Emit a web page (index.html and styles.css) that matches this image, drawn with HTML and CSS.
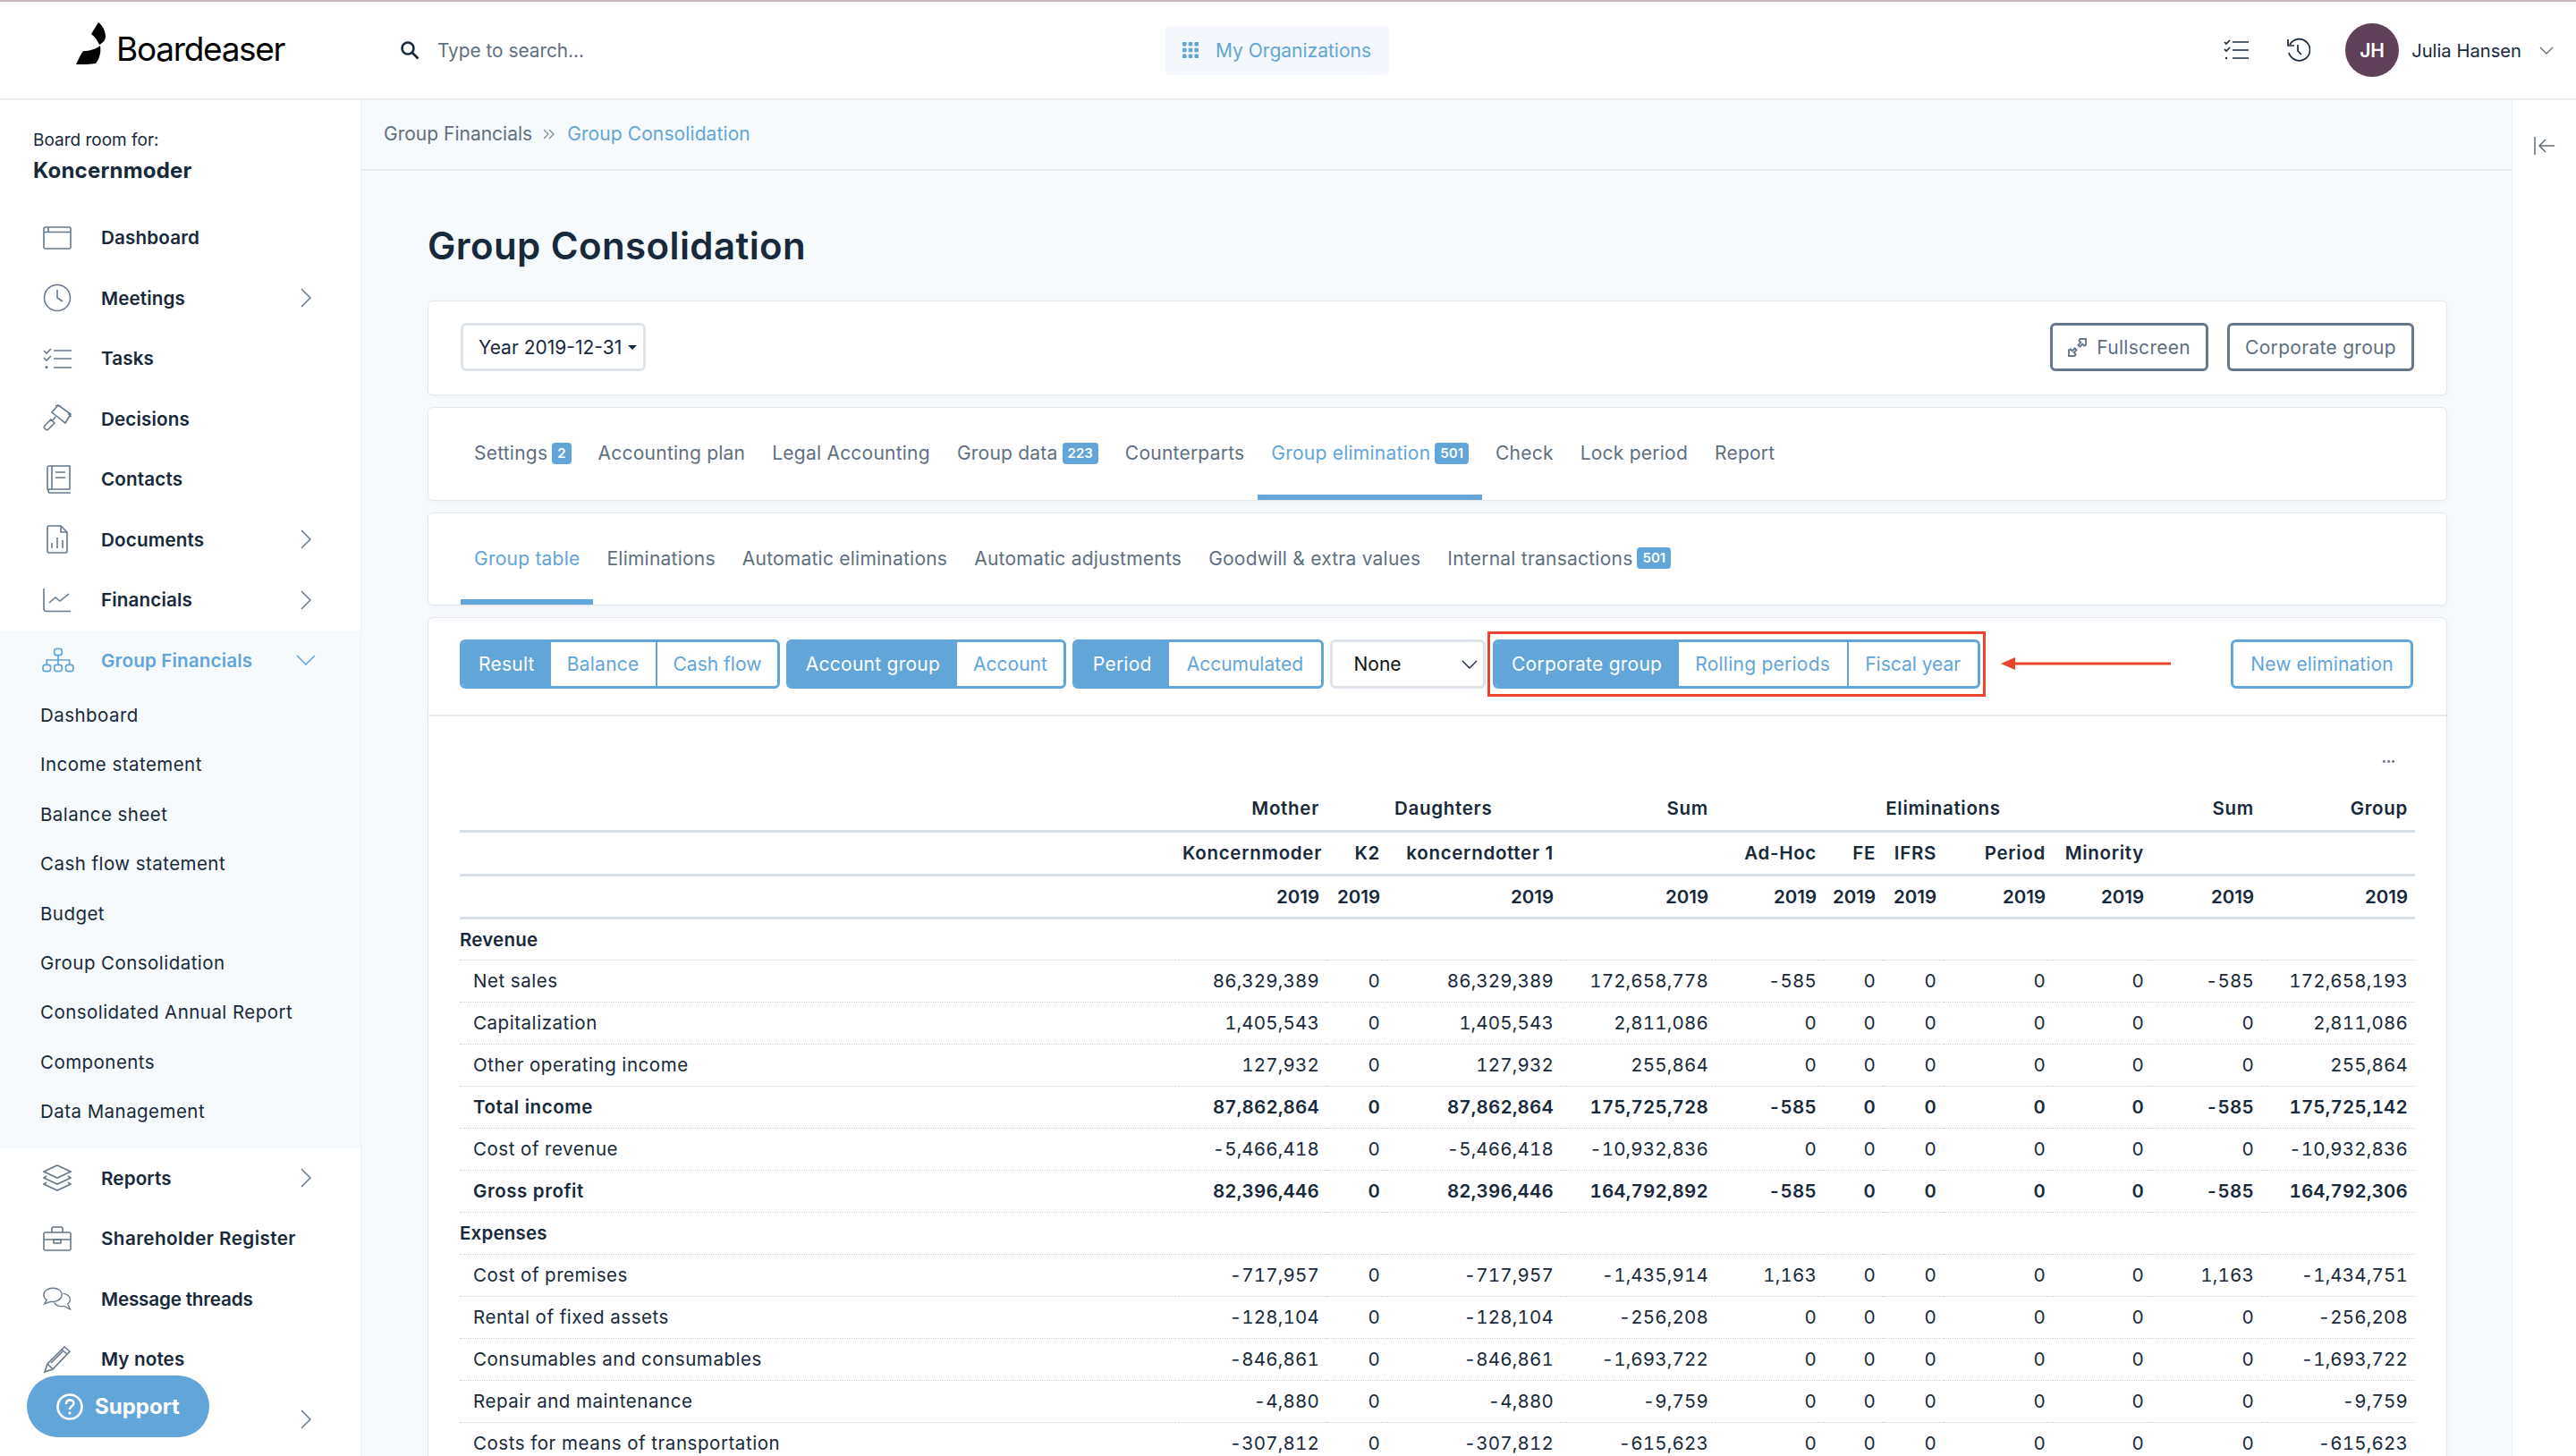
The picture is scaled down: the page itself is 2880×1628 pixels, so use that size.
FILE: index.html
```html
<!DOCTYPE html>
<html lang="en">
<head>
    <meta charset="UTF-8">
    <title>Group Consolidation</title>
    <link rel="stylesheet" href="styles.css">
</head>
<body>
    <header class="topbar">
        <div class="logo">
            <svg class="logo-mark" viewBox="0 0 34 48" width="34" height="48"><path d="M25 0C30 4 33 10 33 16 33 20 30 23 26 25 24 20 21 16 17 13z" fill="#000"/><path d="M27 26C28 32 27 40 22 46 16 47 7 47 0 47 3 41 5 36 8 32 15 32 22 30 27 26z" fill="#000"/></svg>
            <span class="logo-text">Boardeaser</span>
        </div>
        <div class="search">
            <svg viewBox="0 0 22 22" width="22" height="22" fill="none" stroke="#17293a" stroke-width="2.6"><circle cx="9" cy="9" r="6.5"/><path d="M14 14l6.5 6.5"/></svg>
            <span>Type to search...</span>
        </div>
        <div class="orgs">
            <svg viewBox="0 0 18 18" width="18" height="18" fill="#62a5d9"><rect width="4.6" height="4.6" rx="1"/><rect x="6.7" width="4.6" height="4.6" rx="1"/><rect x="13.4" width="4.6" height="4.6" rx="1"/><rect y="6.7" width="4.6" height="4.6" rx="1"/><rect x="6.7" y="6.7" width="4.6" height="4.6" rx="1"/><rect x="13.4" y="6.7" width="4.6" height="4.6" rx="1"/><rect y="13.4" width="4.6" height="4.6" rx="1"/><rect x="6.7" y="13.4" width="4.6" height="4.6" rx="1"/><rect x="13.4" y="13.4" width="4.6" height="4.6" rx="1"/></svg>
            <span>My Organizations</span>
        </div>
        <div class="user">
            <svg class="top-icon" viewBox="0 0 28 24" width="28" height="24" fill="none" stroke="#17293a" stroke-width="1.7"><path d="M10 3h18M10 12h18M10 21h18"/><path d="M1 3l2 2 4-4M1 11l2 2 4-4"/><circle cx="3" cy="21" r="1.2" fill="#17293a" stroke="none"/></svg>
            <svg class="top-icon history" viewBox="0 0 28 28" width="28" height="28" fill="none" stroke="#17293a" stroke-width="1.7"><path d="M5 8a12 12 0 1 1-1 9"/><path d="M3 2v7h7"/><path d="M14 8v7l4 4"/></svg>
            <div class="avatar">JH</div>
            <span class="user-name">Julia Hansen</span>
            <svg viewBox="0 0 16 9" width="16" height="9" fill="none" stroke="#5f6f7f" stroke-width="1.4"><path d="M1 1l7 7 7-7"/></svg>
        </div>
    </header>

    <div class="app">
        <aside class="sidebar">
            <div class="room">
                <div class="room-label">Board room for:</div>
                <div class="room-name">Koncernmoder</div>
            </div>
            <nav class="nav">
                <a class="nav-item">
                    <svg class="nav-icon" viewBox="0 0 32 26"><rect x="1" y="1" width="30" height="24" rx="2"/><path d="M1 6.5h30M6 1v5.5"/></svg>
                    <span>Dashboard</span>
                </a>
                <a class="nav-item">
                    <svg class="nav-icon" viewBox="0 0 32 32"><circle cx="16" cy="16" r="14.5"/><path d="M16 7v9l6 4"/></svg>
                    <span>Meetings</span>
                    <svg class="chev" viewBox="0 0 12 22"><path d="M1 1l10 10L1 21"/></svg>
                </a>
                <a class="nav-item">
                    <svg class="nav-icon" viewBox="0 0 32 24"><path d="M12 3h20M12 12h20M12 22h20"/><path d="M1 3l3 3 5-5M1 11l3 3 5-5"/><circle cx="4" cy="21.5" r="1.6" fill="#66788a" stroke="none"/></svg>
                    <span>Tasks</span>
                </a>
                <a class="nav-item">
                    <svg class="nav-icon" viewBox="0 0 32 32"><path d="M17 1L10 9 25 21 31 11zM14 1.500l6 .5M28 10l3.500 4"/><path d="M14 14l-3 4"/><path d="M9 17l4 4-7 7a2 2 0 0 1-3 0l-1-1a2 2 0 0 1 0-3z"/></svg>
                    <span>Decisions</span>
                </a>
                <a class="nav-item">
                    <svg class="nav-icon" viewBox="0 0 32 32"><path d="M5 28V3a2 2 0 0 1 2-2h23v26H7a2.5 2.5 0 0 0 0 4h24"/><path d="M10 1v26M14 8h11M14 14h11"/></svg>
                    <span>Contacts</span>
                </a>
                <a class="nav-item">
                    <svg class="nav-icon" viewBox="0 0 32 32"><path d="M20 1H7a2 2 0 0 0-2 2v26a2 2 0 0 0 2 2h18a2 2 0 0 0 2-2V8z"/><path d="M20 1v7h7M10 26v-6M16 26V14M22 26v-9"/></svg>
                    <span>Documents</span>
                    <svg class="chev" viewBox="0 0 12 22"><path d="M1 1l10 10L1 21"/></svg>
                </a>
                <a class="nav-item">
                    <svg class="nav-icon" viewBox="0 0 32 28"><path d="M1 1v23a2.5 2.5 0 0 0 2.5 2.5H31"/><path d="M7 17l7-6 5 4 10-8"/></svg>
                    <span>Financials</span>
                    <svg class="chev" viewBox="0 0 12 22"><path d="M1 1l10 10L1 21"/></svg>
                </a>
                <div class="nav-group">
                    <a class="nav-item is-open">
                        <svg class="nav-icon" viewBox="0 0 34 26"><rect x="13" y="1" width="8" height="7" rx="2.5"/><rect x="1" y="18" width="8" height="7" rx="2.5"/><rect x="13" y="18" width="8" height="7" rx="2.5"/><rect x="25" y="18" width="8" height="7" rx="2.5"/><path d="M17 8v10M5 18v-5h24v5"/></svg>
                        <span>Group Financials</span>
                        <svg class="chev-down" viewBox="0 0 22 12"><path d="M1 1l10 10L21 1"/></svg>
                    </a>
                    <a class="sub-item">Dashboard</a>
                    <a class="sub-item">Income statement</a>
                    <a class="sub-item">Balance sheet</a>
                    <a class="sub-item">Cash flow statement</a>
                    <a class="sub-item">Budget</a>
                    <a class="sub-item">Group Consolidation</a>
                    <a class="sub-item">Consolidated Annual Report</a>
                    <a class="sub-item">Components</a>
                    <a class="sub-item">Data Management</a>
                </div>
                <a class="nav-item">
                    <svg class="nav-icon" viewBox="0 0 32 30"><path d="M16 1l15 7-15 7L1 8z"/><path d="M4 13l-3 2 15 7 15-7-3-2"/><path d="M4 20l-3 2 15 7 15-7-3-2"/></svg>
                    <span>Reports</span>
                    <svg class="chev" viewBox="0 0 12 22"><path d="M1 1l10 10L1 21"/></svg>
                </a>
                <a class="nav-item">
                    <svg class="nav-icon" viewBox="0 0 32 28"><rect x="1" y="7" width="30" height="20" rx="2"/><path d="M10 7V3a2 2 0 0 1 2-2h8a2 2 0 0 1 2 2v4M1 15h30"/><rect x="12" y="15" width="8" height="4"/></svg>
                    <span class="nav-wide">Shareholder Register</span>
                </a>
                <a class="nav-item">
                    <svg class="nav-icon" viewBox="0 0 38 30"><path d="M13 1C6 1 1 5 1 10c0 3 1 5 4 7l-3 5 8-3c7 1 14-2 15-8 1-6-5-10-12-10z"/><path d="M27 8c6 1 10 5 9 10-1 2-2 3-3 4l3 7-8-4c-6 1-11-1-13-5"/></svg>
                    <span class="nav-tight">Message threads</span>
                </a>
                <a class="nav-item">
                    <svg class="nav-icon" viewBox="0 0 32 32"><path d="M24 2l6 5-19 20-9 3 3-9z"/><path d="M5 21l6 6M21 5l6 5M9 20L22 7"/></svg>
                    <span>My notes</span>
                </a>
                <a class="nav-item">
                    <span></span>
                    <svg class="chev" viewBox="0 0 12 22"><path d="M1 1l10 10L1 21"/></svg>
                </a>
            </nav>
            <div class="support">
                <svg viewBox="0 0 30 30" width="30" height="30" fill="none" stroke="#fff" stroke-width="2.6"><circle cx="15" cy="15" r="13.5"/><path d="M11 12c0-6 8.500-6 8.500-1 0 3.500-4.500 3-4.500 7"/><circle cx="15" cy="22" r="1.600" fill="#fff" stroke="none"/></svg>
                <span>Support</span>
            </div>
        </aside>

        <main class="main">
            <div class="crumbs">
                <span>Group Financials</span>
                <svg viewBox="0 0 13 12" width="13" height="12" fill="none" stroke="#7c8a98" stroke-width="1.200"><path d="M1 1l5 5-5 5M7 1l5 5-5 5"/></svg>
                <span class="crumb-current">Group Consolidation</span>
            </div>
            <div class="content">
                <h1>Group Consolidation</h1>

                <section class="card card-actions">
                    <button class="btn btn-plain">Year 2019-12-31 <i class="caret"></i></button>
                    <div class="actions-right">
                        <button class="btn btn-dark">
                            <svg viewBox="0 0 22 22" width="21" height="21" fill="none" stroke="#66788a" stroke-width="2"><path d="M14 1h7v7l-2 1-2-2-3 3-2-2 3-3-2-2zM8 21H1v-7l2-1 2 2 3-3 2 2-3 3 2 2z"/></svg>
                            Fullscreen
                        </button>
                        <button class="btn btn-dark">Corporate group</button>
                    </div>
                </section>

                <section class="card tabs">
                    <a class="tab">Settings <b class="badge">2</b></a>
                    <a class="tab">Accounting plan</a>
                    <a class="tab">Legal Accounting</a>
                    <a class="tab">Group data <b class="badge">223</b></a>
                    <a class="tab">Counterparts</a>
                    <a class="tab active">Group elimination <b class="badge">501</b></a>
                    <a class="tab">Check</a>
                    <a class="tab">Lock period</a>
                    <a class="tab">Report</a>
                </section>

                <section class="card tabs">
                    <a class="tab active">Group table</a>
                    <a class="tab">Eliminations</a>
                    <a class="tab">Automatic eliminations</a>
                    <a class="tab">Automatic adjustments</a>
                    <a class="tab">Goodwill &amp; extra values</a>
                    <a class="tab">Internal transactions <b class="badge">501</b></a>
                </section>

                <section class="card card-table">
                    <div class="toolbar">
                        <div class="btn-group"><a class="on">Result</a><a>Balance</a><a>Cash flow</a></div>
                        <div class="btn-group group-account"><a class="on">Account group</a><a>Account</a></div>
                        <div class="btn-group group-period"><a class="on">Period</a><a>Accumulated</a></div>
                        <div class="fake-select">None <svg viewBox="0 0 18 10" width="18" height="10" fill="none" stroke="#17293a" stroke-width="1.400"><path d="M1 1l8 8 8-8"/></svg></div>
                        <div class="highlight">
                            <div class="btn-group"><a class="on">Corporate group</a><a>Rolling periods</a><a>Fiscal year</a></div>
                        </div>
                        <svg class="red-arrow" viewBox="0 0 190 16" width="190" height="16"><path d="M14 8h176" stroke="#e8452c" stroke-width="3"/><path d="M0 8l16-7v14z" fill="#e8452c"/></svg>
                        <a class="btn btn-blue">New elimination</a>
                    </div>
                    <div class="table-wrap">
                        <div class="more">•••</div>
                        <table class="grid">
                            <colgroup>
                                <col class="c-name"><col class="c-1"><col class="c-2"><col class="c-3"><col class="c-4"><col class="c-5"><col class="c-6"><col class="c-7"><col class="c-8"><col class="c-9"><col class="c-10"><col class="c-11">
                            </colgroup>
                            <thead>
                                <tr><th></th><th>Mother</th><th></th><th class="left">Daughters</th><th>Sum</th><th colspan="5" class="elim">Eliminations</th><th>Sum</th><th>Group</th></tr>
                                <tr><th></th><th>Koncernmoder</th><th>K2</th><th>koncerndotter 1</th><th></th><th>Ad-Hoc</th><th>FE</th><th>IFRS</th><th>Period</th><th>Minority</th><th></th><th></th></tr>
                                <tr class="years"><th></th><th>2019</th><th>2019</th><th>2019</th><th>2019</th><th>2019</th><th>2019</th><th>2019</th><th>2019</th><th>2019</th><th>2019</th><th>2019</th></tr>
                            </thead>
                            <tbody>
                                <tr class="section"><td colspan="12">Revenue</td></tr>
                                <tr><td>Net sales</td><td>86,329,389</td><td>0</td><td>86,329,389</td><td>172,658,778</td><td>-585</td><td>0</td><td>0</td><td>0</td><td>0</td><td>-585</td><td>172,658,193</td></tr>
                                <tr><td>Capitalization</td><td>1,405,543</td><td>0</td><td>1,405,543</td><td>2,811,086</td><td>0</td><td>0</td><td>0</td><td>0</td><td>0</td><td>0</td><td>2,811,086</td></tr>
                                <tr><td>Other operating income</td><td>127,932</td><td>0</td><td>127,932</td><td>255,864</td><td>0</td><td>0</td><td>0</td><td>0</td><td>0</td><td>0</td><td>255,864</td></tr>
                                <tr class="total"><td>Total income</td><td>87,862,864</td><td>0</td><td>87,862,864</td><td>175,725,728</td><td>-585</td><td>0</td><td>0</td><td>0</td><td>0</td><td>-585</td><td>175,725,142</td></tr>
                                <tr><td>Cost of revenue</td><td>-5,466,418</td><td>0</td><td>-5,466,418</td><td>-10,932,836</td><td>0</td><td>0</td><td>0</td><td>0</td><td>0</td><td>0</td><td>-10,932,836</td></tr>
                                <tr class="total"><td>Gross profit</td><td>82,396,446</td><td>0</td><td>82,396,446</td><td>164,792,892</td><td>-585</td><td>0</td><td>0</td><td>0</td><td>0</td><td>-585</td><td>164,792,306</td></tr>
                                <tr class="section"><td colspan="12">Expenses</td></tr>
                                <tr><td>Cost of premises</td><td>-717,957</td><td>0</td><td>-717,957</td><td>-1,435,914</td><td>1,163</td><td>0</td><td>0</td><td>0</td><td>0</td><td>1,163</td><td>-1,434,751</td></tr>
                                <tr><td>Rental of fixed assets</td><td>-128,104</td><td>0</td><td>-128,104</td><td>-256,208</td><td>0</td><td>0</td><td>0</td><td>0</td><td>0</td><td>0</td><td>-256,208</td></tr>
                                <tr><td>Consumables and consumables</td><td>-846,861</td><td>0</td><td>-846,861</td><td>-1,693,722</td><td>0</td><td>0</td><td>0</td><td>0</td><td>0</td><td>0</td><td>-1,693,722</td></tr>
                                <tr><td>Repair and maintenance</td><td>-4,880</td><td>0</td><td>-4,880</td><td>-9,759</td><td>0</td><td>0</td><td>0</td><td>0</td><td>0</td><td>0</td><td>-9,759</td></tr>
                                <tr><td>Costs for means of transportation</td><td>-307,812</td><td>0</td><td>-307,812</td><td>-615,623</td><td>0</td><td>0</td><td>0</td><td>0</td><td>0</td><td>0</td><td>-615,623</td></tr>
                            </tbody>
                        </table>
                    </div>
                </section>
            </div>
        </main>

        <aside class="rail">
            <svg viewBox="0 0 24 22" width="24" height="22" fill="none" stroke="#5f6f7f" stroke-width="1.500"><path d="M1 1v20M23 11H6M13 4l-7 7 7 7"/></svg>
        </aside>
    </div>
</body>
</html>
```

FILE: styles.css
```css
* {
    box-sizing: border-box;
}

html, body {
    margin: 0;
    height: 100%;
    overflow: hidden;
}

body {
    font-family: Inter, "Noto Sans", sans-serif;
    font-size: 21px;
    color: #17293a;
    background: #fff;
    display: flex;
    flex-direction: column;
}

/* top bar */
.topbar {
    height: 112px;
    flex: none;
    display: flex;
    align-items: center;
    border-top: 2px solid #c9b5bd;
    border-bottom: 2px solid #e8ecf0;
    background: #fff;
}

.logo {
    width: 447px;
    padding-left: 85px;
    display: flex;
    align-items: center;
    gap: 11px;
    flex: none;
}

.logo-mark {
    margin-top: -14px;
}

.logo-text {
    font-size: 37px;
    color: #000;
    letter-spacing: -1.3px;
    margin-top: -4px;
}

.search {
    width: 856px;
    flex: none;
    display: flex;
    align-items: center;
    gap: 20px;
    color: #5f6f7f;
    font-size: 20.8px;
}

.orgs {
    width: 250px;
    height: 55px;
    flex: none;
    display: flex;
    align-items: center;
    gap: 19px;
    padding-left: 19px;
    background: #f4f8fc;
    border-radius: 6px;
    color: #62a5d9;
}

.user {
    margin-left: auto;
    display: flex;
    align-items: center;
    padding-right: 25px;
}

.top-icon.history {
    margin-left: 41px;
}

.avatar {
    width: 60px;
    height: 60px;
    margin-left: 39px;
    border-radius: 50%;
    background: #5e4159;
    color: #fff;
    font-weight: 600;
    font-size: 21px;
    display: flex;
    align-items: center;
    justify-content: center;
}

.user-name {
    margin: 0 20px 0 14px;
    font-size: 20.2px;
}

/* layout */
.app {
    flex: 1;
    min-height: 0;
    display: flex;
}

.sidebar {
    width: 404px;
    flex: none;
    position: relative;
    overflow: hidden;
    background: #fff;
    border-right: 1px solid #eceff3;
}

.room {
    padding: 32px 37px 0;
}

.room-label {
    font-size: 19px;
    line-height: 26px;
}

.room-name {
    font-size: 24px;
    font-weight: 700;
    line-height: 34px;
    margin-top: 4px;
    letter-spacing: 0.2px;
}

.nav {
    margin-top: 24px;
}

.nav-item {
    height: 67.5px;
    display: flex;
    align-items: center;
    padding-left: 46px;
    font-weight: 600;
    font-size: 20.7px;
    letter-spacing: 0.1px;
    position: relative;
}

.nav-item > span {
    margin-left: 67px;
}

.nav-item > .nav-tight {
    letter-spacing: -0.2px;
}

.nav-item > .nav-wide {
    letter-spacing: 0.4px;
}

.nav-icon {
    position: absolute;
    left: 48px;
    top: 50%;
    width: 32px;
    height: 32px;
    transform: translateY(-50%);
    fill: none;
    stroke: #66788a;
    stroke-width: 1.6;
}

.chev, .chev-down {
    position: absolute;
    top: 50%;
    fill: none;
    stroke: #66788a;
    stroke-width: 1.5;
    transform: translateY(-50%);
}

.chev {
    left: 336px;
    width: 12px;
    height: 22px;
}

.chev-down {
    left: 331px;
    width: 22px;
    height: 12px;
    stroke: #62a5d9;
}

.nav-group {
    background: #f7fafd;
    height: 579px;
}

.is-open {
    color: #62a5d9;
}

.is-open .nav-icon {
    stroke: #62a5d9;
    width: 36px;
    left: 47px;
}

.sub-item {
    display: block;
    height: 55.4px;
    line-height: 55.4px;
    padding-left: 45px;
    font-size: 20.5px;
    letter-spacing: 0.45px;
}

.support {
    position: absolute;
    left: 30px;
    top: 1426px;
    width: 204px;
    height: 69px;
    border-radius: 35px;
    background: #62a5d9;
    color: #fff;
    font-size: 24px;
    font-weight: 700;
    display: flex;
    align-items: center;
    padding-left: 33px;
    gap: 13px;
}

.main {
    flex: 1;
    min-width: 0;
    background: #f7fafd;
    overflow: hidden;
}

.rail {
    width: 72px;
    flex: none;
    background: #fff;
    border-left: 1px solid #eceff3;
    padding: 40px 0 0 24px;
}

.crumbs {
    height: 79px;
    display: flex;
    align-items: center;
    gap: 12px;
    padding: 0 0 2px 25px;
    border-bottom: 2px solid #e9edf1;
    color: #5f6f7f;
}

.crumb-current {
    color: #62a5d9;
    margin-left: 2px;
    letter-spacing: 0.1px;
}

.content {
    padding: 0 72px 0 74px;
}

h1 {
    margin: 0;
    height: 145px;
    line-height: 168px;
    font-size: 42px;
    font-weight: 600;
    letter-spacing: 0.4px;
}

/* cards */
.card {
    background: #fff;
    border: 1px solid #e3e8ee;
    border-radius: 6px;
    box-shadow: 0 2px 4px rgba(60, 90, 120, 0.05);
    margin-bottom: 13px;
}

.card-actions {
    height: 106px;
    display: flex;
    align-items: center;
    justify-content: space-between;
    padding: 0 36px 2px;
}

.actions-right {
    display: flex;
    gap: 21px;
}

.btn {
    height: 54px;
    padding: 0 17px;
    display: inline-flex;
    align-items: center;
    gap: 11px;
    font: inherit;
    letter-spacing: 0.3px;
    background: #fff;
    border-radius: 6px;
}

.btn-plain {
    width: 207px;
    border: 3px solid #dee4ea;
    color: #17293a;
    gap: 7px;
    letter-spacing: 0;
    white-space: nowrap;
}

.caret {
    border: 5px solid transparent;
    border-top-color: #17293a;
    border-bottom: 0;
}

.btn-dark {
    border: 3px solid #66788a;
    color: #5f6f7f;
}

.btn-blue {
    border: 3px solid #62a5d9;
    color: #62a5d9;
    margin-left: auto;
    height: 55px;
    width: 204px;
    justify-content: center;
    padding: 0;
    letter-spacing: 0.1px;
}

.tabs {
    height: 104.5px;
    display: flex;
    padding: 0 36px;
}

.tab {
    padding: 0 15px;
    display: flex;
    align-items: center;
    gap: 5px;
    color: #5f6f7f;
    border-bottom: 6px solid transparent;
    height: 100%;
    padding-top: 5px;
    white-space: nowrap;
    letter-spacing: 0.23px;
}

.tab.active {
    color: #62a5d9;
    border-bottom-color: #62a5d9;
}

.badge {
    background: #62a5d9;
    color: #fff;
    font-size: 15px;
    font-weight: 600;
    line-height: 24px;
    padding: 0 6px;
    border-radius: 4px;
    letter-spacing: 0;
}

/* toolbar above table */
.card-table {
    margin: 0;
}

.toolbar {
    height: 110px;
    display: flex;
    align-items: flex-start;
    padding: 24px 37px 0 35px;
    gap: 7px;
    border-bottom: 2px solid #e9edf1;
    letter-spacing: 0.25px;
}

.btn-group {
    display: flex;
    height: 55px;
    border: 3px solid #62a5d9;
    border-radius: 6px;
    color: #62a5d9;
    overflow: hidden;
}

.btn-group a {
    padding: 0 18px;
    display: flex;
    align-items: center;
    white-space: nowrap;
}

.btn-group a:last-child {
    letter-spacing: 0;
}

.btn-group a + a {
    border-left: 2px solid #62a5d9;
}

.btn-group .on {
    background: #62a5d9;
    color: #fff;
}

.btn-group .on + a {
    border-left: 0;
}

.btn-group.group-account a {
    padding: 0 18.5px;
}

.btn-group.group-period a {
    padding: 0 19.5px;
}

.fake-select {
    width: 174px;
    height: 55px;
    border: 3px solid #dee4ea;
    border-radius: 6px;
    display: flex;
    align-items: center;
    justify-content: space-between;
    padding: 0 6px 0 24px;
    color: #111;
    letter-spacing: 0;
}

.highlight {
    flex: none;
    padding: 6px 3px;
    margin: -9px 0 0 -5px;
    border: 3px solid #e8452c;
}

.highlight .btn-group a {
    padding: 0 18.5px;
}

.red-arrow {
    margin: 19px 0 0 10px;
}

.table-wrap {
    padding: 0 35px;
    position: relative;
}

.more {
    text-align: right;
    height: 79px;
    line-height: 100px;
    font-size: 9px;
    padding-right: 22px;
    color: #5f6f7f;
}

/* table */
.grid {
    width: 2186px;
    border-collapse: collapse;
    table-layout: fixed;
    font-size: 20.5px;
}

.c-name { width: 800px; }
.c-1 { width: 169px; }
.c-2 { width: 68px; }
.c-3 { width: 194px; }
.c-4 { width: 173px; }
.c-5 { width: 121px; }
.c-6 { width: 66px; }
.c-7 { width: 68px; }
.c-8 { width: 122px; }
.c-9 { width: 110px; }
.c-10 { width: 123px; }
.c-11 { width: 172px; }

.grid th {
    height: 49px;
    padding: 0 8px;
    text-align: right;
    font-weight: 600;
    letter-spacing: 0.7px;
    border-bottom: 3px solid #d8dfe6;
    white-space: nowrap;
}

.grid .years th {
    height: 48px;
    letter-spacing: 0;
}

.grid th.left {
    text-align: left;
}

.grid th.elim {
    text-align: center;
    padding-left: 30px;
}

.grid td {
    height: 47px;
    padding: 0 8px;
    text-align: right;
    font-variant-numeric: tabular-nums;
    letter-spacing: 0.2px;
    border-bottom: 1px dotted #c5d2de;
    white-space: nowrap;
}

.grid td:first-child {
    text-align: left;
    padding-left: 15px;
    letter-spacing: 0.55px;
}

.total td {
    font-weight: 600;
}

.grid .section td {
    padding-left: 0;
    font-weight: 600;
    letter-spacing: 0.2px;
}
```
